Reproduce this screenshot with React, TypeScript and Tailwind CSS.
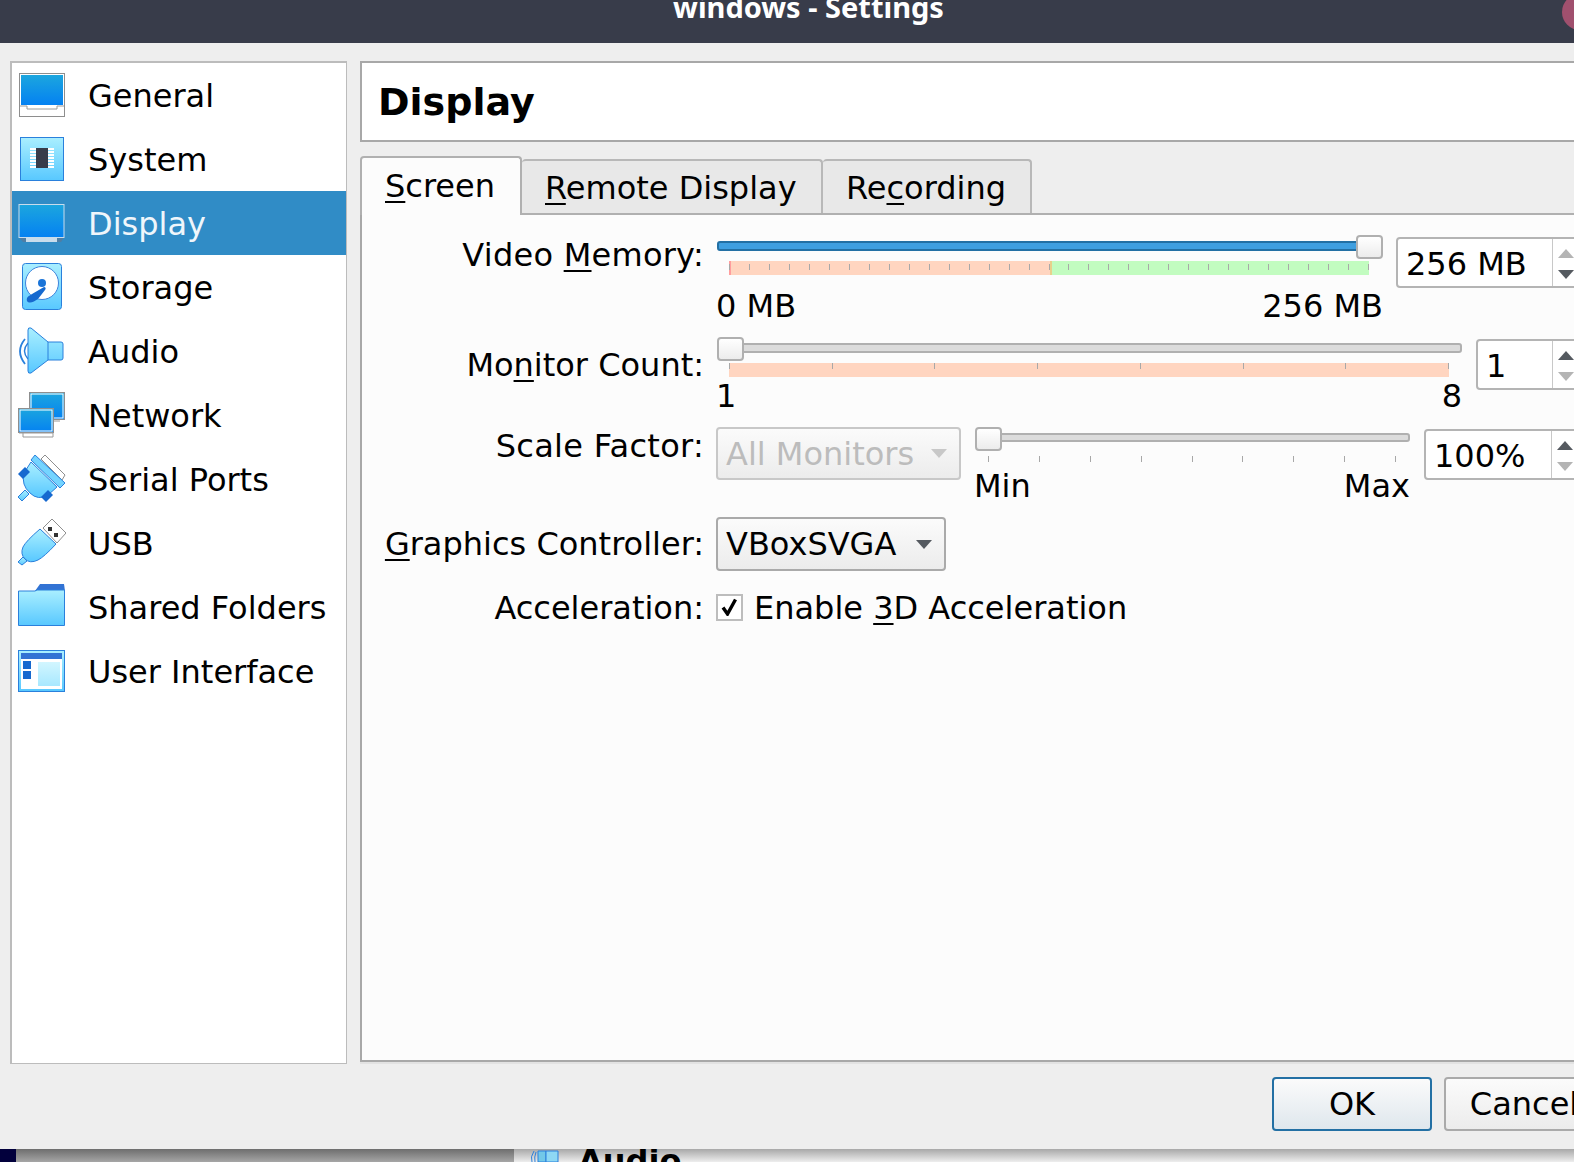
import React from "react";

const Defs = () => (
  <svg width="0" height="0" className="absolute">
    <defs>
      <linearGradient id="scr" x1="0" y1="0" x2="0" y2="1">
        <stop offset="0" stopColor="#1ca6de" />
        <stop offset="1" stopColor="#0481f2" />
      </linearGradient>
      <linearGradient id="lb" x1="0" y1="0" x2="0" y2="1">
        <stop offset="0" stopColor="#aaefff" />
        <stop offset="1" stopColor="#58c8ff" />
      </linearGradient>
      <linearGradient id="lb2" x1="0" y1="0" x2="0" y2="1">
        <stop offset="0" stopColor="#d2f6ff" />
        <stop offset="1" stopColor="#a8e8ff" />
      </linearGradient>
    </defs>
  </svg>
);

const Ico = ({ children }: { children: React.ReactNode }) => (
  <svg width="48" height="48" viewBox="0 0 48 48" className="shrink-0">
    {children}
  </svg>
);

const icons: Record<string, React.ReactNode> = {
  General: (
    <Ico>
      <rect x="1.5" y="2.5" width="45" height="43" fill="#fff" stroke="#8e8e8e" />
      <rect x="3" y="4" width="42" height="30" fill="url(#scr)" />
      <path d="M2 35H9V38H39V35H46" fill="none" stroke="#9a9a9a" />
    </Ico>
  ),
  System: (
    <Ico>
      <rect x="2.5" y="2.5" width="43" height="43" fill="url(#lb)" stroke="#2a80dc" />
      {[13, 16, 19, 22, 25, 28, 31].map((y) => (
        <rect key={y} x="12" y={y} width="24" height="2" fill="#fff" />
      ))}
      <rect x="18" y="13" width="12" height="20" fill="#383c4a" />
    </Ico>
  ),
  Display: (
    <Ico>
      <path d="M0.5 38H46.5L43 43H5Z" fill="#4f7ea5" />
      <rect x="8" y="38" width="31" height="5" fill="#c8dcec" />
      <rect x="1" y="5.5" width="45" height="33" fill="url(#scr)" stroke="#c8dcec" />
    </Ico>
  ),
  Storage: (
    <Ico>
      <rect x="4.5" y="0.5" width="39" height="46" rx="3" fill="url(#lb)" stroke="#2a80dc" />
      <circle cx="24" cy="20" r="16.5" fill="#fff" stroke="#3d84dc" />
      <circle cx="24" cy="20" r="4" fill="#1a74d8" />
      <path d="M9 38C8 34 11 33 14 31L26 24C28 24 28 26 27 27L20 36C16 39 11 41 9 38Z" fill="#1669cf" />
    </Ico>
  ),
  Audio: (
    <Ico>
      <path d="M7 12Q-3 24 7 37" fill="none" stroke="#2a80dc" strokeWidth="1.8" />
      <path d="M10 16Q3 24 10 32" fill="none" stroke="#2a80dc" strokeWidth="1.4" />
      <path d="M13 1L30 15H43Q45 15 45 17V31Q45 33 43 33H30L13 46Q10 47 10 44V3Q10 0 13 1Z" fill="url(#lb)" stroke="#2a80dc" />
      <path d="M30 15V33" stroke="#2a80dc" />
    </Ico>
  ),
  Network: (
    <Ico>
      <rect x="11.5" y="1.5" width="35" height="27" fill="url(#scr)" stroke="#8e8e8e" />
      <rect x="13" y="3" width="32" height="24" fill="none" stroke="#fff" />
      <path d="M34 30H42" stroke="#9a9a9a" />
      <rect x="0.5" y="17.5" width="35" height="24" fill="url(#scr)" stroke="#8e8e8e" />
      <rect x="2" y="19" width="32" height="21" fill="none" stroke="#fff" />
      <path d="M1 42H35V46H5V42" fill="#fff" stroke="#9a9a9a" />
    </Ico>
  ),
  "Serial Ports": (
    <Ico>
      <path d="M27 0L47 20L44 25L23 4Z" fill="#fff" stroke="#8e8e8e" />
      <path d="M17 0L47 28L42 33L13 5Z" fill="#74d4ff" stroke="#2a80dc" />
      <path d="M13 7L39 32L30 40Q20 46 12 38Q3 30 6 18Z" fill="url(#lb)" stroke="#2a80dc" />
      <path d="M0 19L7 12L12 17L5 24Z" fill="#1669cf" />
      <path d="M23 42L30 35L35 40L28 47Z" fill="#1669cf" />
      <path d="M0 42L7 35L11 39L4 46Z" fill="url(#lb)" stroke="#2a80dc" />
    </Ico>
  ),
  USB: (
    <Ico>
      <path d="M34 0L48 14L39 24L25 9Z" fill="#fff" stroke="#8e8e8e" />
      <rect x="30" y="8" width="4" height="4" fill="#333" />
      <rect x="36" y="14" width="4" height="4" fill="#333" />
      <path d="M22 10L38 25Q26 38 20 41Q12 45 7 40Q2 35 5 28Q8 22 22 10Z" fill="url(#lb)" stroke="#2a80dc" />
      <path d="M0 43L5 38L9 42L4 46Z" fill="url(#lb)" stroke="#2a80dc" />
    </Ico>
  ),
  "Shared Folders": (
    <Ico>
      <path d="M17 8L22 1H46L47 8Z" fill="#3273d4" />
      <path d="M0.5 8H17L19 7H46.5V42.5H0.5Z" fill="url(#lb)" stroke="#2a80dc" />
    </Ico>
  ),
  "User Interface": (
    <Ico>
      <rect x="0.5" y="3.5" width="46" height="41" fill="url(#lb)" stroke="#2a80dc" />
      <rect x="3" y="6" width="41" height="36" fill="#fff" />
      <rect x="3" y="6" width="41" height="6" fill="#3273d4" />
      <rect x="5" y="14" width="8" height="8" fill="#1669cf" />
      <rect x="5" y="24" width="8" height="8" fill="#1669cf" />
      <rect x="20" y="15" width="22" height="24" fill="url(#lb2)" />
    </Ico>
  ),
};

const items = ["General", "System", "Display", "Storage", "Audio", "Network", "Serial Ports", "USB", "Shared Folders", "User Interface"];

const U = ({ children }: { children: React.ReactNode }) => (
  <span className="underline decoration-2 underline-offset-[4px]">{children}</span>
);

const Arrow = ({ down, dim }: { down?: boolean; dim?: boolean }) => (
  <svg width="16" height="9" viewBox="0 0 16 9" className={dim ? "text-[#b4b4b4]" : "text-[#555a60]"}>
    <path d={down ? "M0 0H16L8 9Z" : "M8 0L16 9H0Z"} fill="currentColor" />
  </svg>
);

const Spin = ({ value, upDim, downDim, valueCls, cls }: { value: string; upDim?: boolean; downDim?: boolean; valueCls: string; cls: string }) => (
  <div className={`${cls} w-[240px] h-[51px] shrink-0 flex bg-white border-2 border-[#b4b4b4] rounded-[4px]`}>
    <div className={`${valueCls} shrink-0 pl-2`}>{value}</div>
    <div className="w-[30px] border-l border-[#c8c8c8] flex flex-col items-start pl-[5px] pt-[10px] gap-[12px]">
      <Arrow dim={upDim} />
      <Arrow down dim={downDim} />
    </div>
  </div>
);

const Thumb = ({ cls }: { cls: string }) => (
  <div className={`${cls} absolute top-0 w-[27px] h-[24px] rounded-[4px] border-2 border-[#b0b0b0] bg-gradient-to-b from-white to-[#ececec]`} />
);

const Groove = ({ blue }: { blue?: boolean }) =>
  blue ? (
    <div className="absolute left-0 right-0 top-[6px] h-[10px] rounded-[3px] border-2 border-[#2370a4] bg-[#3f9fe0]" />
  ) : (
    <div className="absolute left-0 right-0 top-[6px] h-[10px] rounded-[3px] border-2 border-[#b0b0b0] bg-[#dcdcdc]" />
  );

const Ticks = ({ n, cls }: { n: number; cls: string }) => (
  <div className={`absolute inset-0 flex justify-between ${cls}`}>
    {Array.from({ length: n }).map((_, i) => (
      <div key={i} className="w-[1px] h-[6px] bg-[#a8a8a8]" />
    ))}
  </div>
);

const Label = ({ children, cls = "" }: { children: React.ReactNode; cls?: string }) => (
  <div className={`w-[345px] mr-[12px] shrink-0 text-right h-10 leading-10 ${cls}`}>{children}</div>
);

export default function App() {
  return (
    <div className="relative w-[1574px] h-[1162px] overflow-hidden flex flex-col bg-[#eeeeee] text-[32px] text-black font-['DejaVu_Sans',sans-serif]">
      <Defs />
      {/* title bar */}
      <div className="relative h-[43px] shrink-0 bg-[#383c4a] overflow-hidden flex justify-center pl-[43px]">
        <div className="font-['Noto_Sans',sans-serif] font-bold text-[29px] leading-[34px] mt-[-10px] text-white whitespace-nowrap">windows - Settings</div>
        <div className="absolute left-[1562px] top-[-6px] w-[36px] h-[36px] rounded-full bg-[#a0506e]" />
      </div>

      {/* body */}
      <div className="flex-1 min-h-0 flex flex-col">
        <div className="flex mt-[18px] ml-[10px] h-[1003px]">
          {/* sidebar */}
          <div className="w-[337px] shrink-0 bg-white border-2 border-[#bcbcbc] border-r border-b">
            {items.map((it) => {
              const sel = it === "Display";
              return (
                <div key={it} className={`h-[64px] flex items-center pl-[6px] pr-1 ${sel ? "bg-[#308cc6] text-[#eff6fb]" : ""}`}>
                  {icons[it]}
                  <span className="ml-[22px] pt-[2px]">{it}</span>
                </div>
              );
            })}
          </div>

          {/* right panel */}
          <div className="ml-[13px] w-[1300px] shrink-0 flex flex-col h-[1003px]">
            <div className="h-[81px] shrink-0 bg-white border-2 border-r-0 border-[#a8a8a8] pl-[16px] font-bold text-[38px] leading-[78px]">Display</div>

            {/* tabs */}
            <div className="flex items-end h-[73px] shrink-0 border-b-2 border-[#b0b0b0]">
              <div className="w-[162px] h-[59px] mb-[-2px] relative bg-[#fcfcfc] border-2 border-b-0 border-[#b0b0b0] rounded-t-[4px] pl-[23px] leading-[56px]"><U>S</U>creen</div>
              <div className="w-[301px] h-[54px] bg-[#e8e8e8] border-2 border-l-0 border-b-0 border-[#b8b8b8] rounded-t-[4px] pl-[23px] leading-[54px]"><U>R</U>emote Display</div>
              <div className="w-[209px] h-[54px] bg-[#e8e8e8] border-2 border-l-0 border-b-0 border-[#b8b8b8] rounded-t-[4px] pl-[23px] leading-[54px]">Re<U>c</U>ording</div>
            </div>

            {/* content */}
            <div className="flex-1 min-h-0 bg-[#fcfcfc] border-l-2 border-b-2 border-[#a8a8a8] pt-[20px]">
              {/* Video memory */}
              <div className="flex h-[90px] -ml-[3px]">
                <Label cls="tracking-[0.25px]">Video <U>M</U>emory:</Label>
                <div className="w-[666px] ml-[1px] shrink-0">
                  <div className="relative h-[24px]">
                    <Groove blue />
                    <Thumb cls="right-0" />
                  </div>
                  <div className="relative ml-[12px] w-[640px] h-[14px] mt-[2px] flex">
                    <div className="w-[321px] bg-[#ffd5c0] border-l-2 border-[#ff9d9d]" />
                    <div className="flex-1 bg-[#c2fcc0] border-l-2 border-[#e8d08c]" />
                    <Ticks n={33} cls="pt-[3px]" />
                  </div>
                  <div className="flex justify-between h-10 leading-10 mt-[11px] -ml-[1px]">
                    <span>0 MB</span>
                    <span>256 MB</span>
                  </div>
                </div>
                <Spin cls="ml-[13px] mt-[2px]" valueCls="w-[154px] leading-[50px]" value="256 MB" upDim />
              </div>

              {/* Monitor count */}
              <div className="flex h-[77px] mt-[12px] -ml-[3px]">
                <Label cls="mt-[8px]">Mo<U>n</U>itor Count:</Label>
                <div className="w-[745px] ml-[1px] shrink-0">
                  <div className="relative h-[24px]">
                    <Groove />
                    <Thumb cls="left-0" />
                  </div>
                  <div className="relative ml-[12px] w-[720px] h-[14px] mt-[2px] bg-[#ffd5c0]">
                    <Ticks n={8} cls="pt-0" />
                  </div>
                  <div className="flex justify-between h-[36px] leading-[36px] mt-[1px] -ml-[1px]">
                    <span>1</span>
                    <span>8</span>
                  </div>
                </div>
                <Spin cls="ml-[14px] mt-[2px]" valueCls="w-[74px] leading-[50px]" value="1" downDim />
              </div>

              {/* Scale factor */}
              <div className="flex h-[77px] mt-[13px] -ml-[3px]">
                <Label cls="-mt-[1px] tracking-[0.3px]">Scale Factor:</Label>
                <div className="w-[245px] h-[53px] shrink-0 flex items-center justify-between pl-[8px] pr-[12px] rounded-[4px] border-2 border-[#c8c8c8] bg-gradient-to-b from-[#fbfbfb] to-[#ececec] text-[#bcbcbc]">
                  <span>All Monitors</span>
                  <svg width="16" height="9" viewBox="0 0 16 9" className="text-[#c8c8c8]"><path d="M0 0H16L8 9Z" fill="currentColor" /></svg>
                </div>
                <div className="w-[435px] shrink-0 ml-[14px]">
                  <div className="relative h-[23px]">
                    <div className="absolute left-0 right-0 top-[6px] h-[9px] rounded-[3px] border-2 border-[#b0b0b0] bg-[#dcdcdc]" />
                    <Thumb cls="left-0" />
                  </div>
                  <div className="relative ml-[13px] w-[408px] h-[7px] mt-[6px]">
                    <Ticks n={9} cls="" />
                  </div>
                  <div className="flex justify-between h-[36px] leading-[36px] mt-[5px] -ml-[1px]">
                    <span>Min</span>
                    <span>Max</span>
                  </div>
                </div>
                <Spin cls="ml-[14px] mt-[2px]" valueCls="w-[125px] leading-[50px]" value="100%" downDim />
              </div>

              {/* Graphics controller */}
              <div className="flex items-center h-[54px] mt-[13px] -ml-[3px]">
                <Label><U>G</U>raphics Controller:</Label>
                <div className="w-[230px] h-[54px] flex items-center justify-between pl-[8px] pr-[12px] rounded-[4px] border-2 border-[#aaaaaa] bg-gradient-to-b from-[#fbfbfb] to-[#ececec]">
                  <span>VBoxSVGA</span>
                  <svg width="16" height="9" viewBox="0 0 16 9" className="text-[#555a60]"><path d="M0 0H16L8 9Z" fill="currentColor" /></svg>
                </div>
              </div>

              {/* Acceleration */}
              <div className="flex items-center h-[30px] mt-[21px] -ml-[3px]">
                <Label cls="pt-[1px]">Acceleration:</Label>
                <div className="w-[27px] h-[27px] shrink-0 border-2 border-[#bdbdbd] bg-white flex items-center justify-center">
                  <svg width="17" height="18" viewBox="0 0 17 18"><path d="M2 9.5L6.5 16L14.5 1.5" fill="none" stroke="#000" strokeWidth="3.4" /></svg>
                </div>
                <span className="ml-[11px] pt-[2px] whitespace-nowrap">Enable <U>3</U>D Acceleration</span>
              </div>
            </div>
            <div className="h-[2px] shrink-0 bg-[#e2e2e2]" />
          </div>
        </div>

        {/* buttons */}
        <div className="flex mt-[13px] ml-[1272px] gap-[12px]">
          <div className="w-[160px] h-[54px] shrink-0 flex items-center justify-center rounded-[4px] border-2 border-[#2370a4] bg-gradient-to-b from-[#fbfbfb] to-[#dfe7ed]">OK</div>
          <div className="w-[160px] h-[54px] shrink-0 flex items-center justify-center rounded-[4px] border-2 border-[#aaaaaa] bg-gradient-to-b from-[#fbfbfb] to-[#ececec]">Cancel</div>
        </div>
      </div>

      {/* what lies behind the dialog */}
      <div className="h-[13px] shrink-0 flex overflow-hidden">
        <div className="w-[16px] bg-[#02003c]" />
        <div className="w-[498px] bg-gradient-to-b from-[#6e6e6e] to-[#a6a6a6]" />
        <div className="flex-1 bg-gradient-to-b from-[#a8a8a8] to-[#eeeeee] flex items-start pl-[14px]">
          <svg width="32" height="13" viewBox="0 0 32 13" className="shrink-0">
            <path d="M10 2H18V13H10Z" fill="#72c8e8" stroke="#2a80dc" />
            <path d="M18 2H30V13H18Z" fill="#8ed8f4" stroke="#2a80dc" />
            <path d="M6 2Q2 8 4 13M8 3Q6 8 7 13" fill="none" stroke="#2a80dc" />
          </svg>
          <span className="ml-[18px] font-bold text-[32px] leading-[38px] -mt-[7px]">Audio</span>
        </div>
      </div>
    </div>
  );
}
